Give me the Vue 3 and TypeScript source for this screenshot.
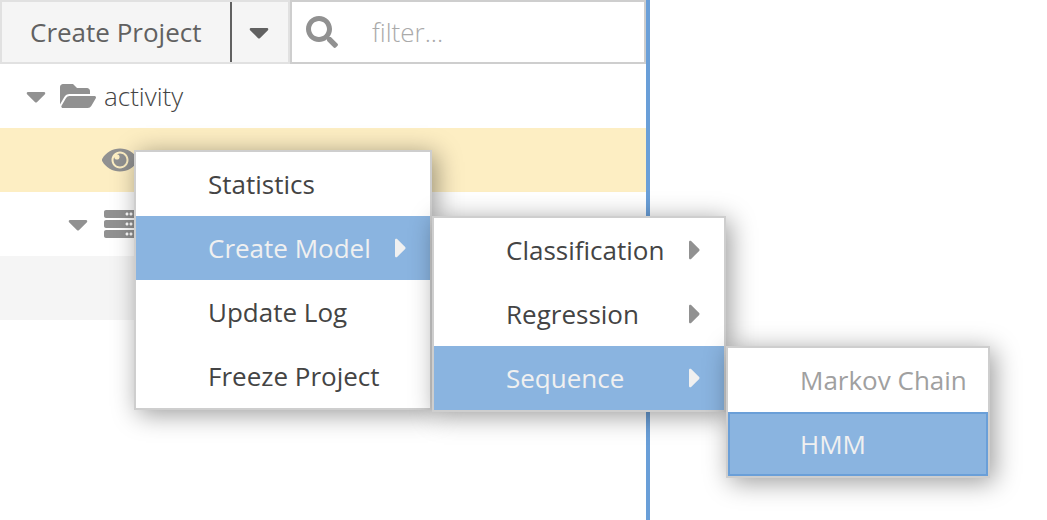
<script setup lang="ts">
import { ref } from 'vue'

interface MenuEntry {
  label: string
  submenu?: boolean
  active?: boolean
}

const projectMenu = ref<MenuEntry[]>([
  { label: 'Statistics' },
  { label: 'Create Model', submenu: true, active: true },
  { label: 'Update Log' },
  { label: 'Freeze Project' },
])
const modelMenu = ref<MenuEntry[]>([
  { label: 'Classification', submenu: true },
  { label: 'Regression', submenu: true },
  { label: 'Sequence', submenu: true, active: true },
])
const filter = ref('')

const caretDown =
  'M31.3 192h257.3c17.8 0 26.7 21.5 14.1 34.1L174.1 354.7c-7.8 7.8-20.5 7.8-28.3 0L17.2 226.1C4.6 213.5 13.5 192 31.3 192z'
const caretRight =
  'M0 384.662V127.338c0-17.818 21.543-26.741 34.142-14.142l128.662 128.662c7.81 7.81 7.81 20.474 0 28.284L34.142 398.804C21.543 411.404 0 402.48 0 384.662z'
</script>

<template>
  <div class="page">
    <aside class="sidebar">
      <div class="toolbar">
        <div class="create">
          <button class="create-main">Create Project</button>
          <button class="create-more" aria-label="More">
            <svg class="caret-down" viewBox="0 0 320 512"><path :d="caretDown" /></svg>
          </button>
        </div>
        <label class="filter">
          <svg class="search" viewBox="0 0 512 512">
            <path d="M505 442.7L405.3 343c-4.5-4.5-10.6-7-17-7H372c27.6-35.3 44-79.7 44-128C416 93.1 322.9 0 208 0S0 93.1 0 208s93.1 208 208 208c48.3 0 92.7-16.4 128-44v16.3c0 6.4 2.5 12.5 7 17l99.7 99.7c9.4 9.4 24.6 9.4 33.9 0l28.3-28.3c9.4-9.4 9.4-24.6.1-34zM208 336c-70.7 0-128-57.2-128-128 0-70.7 57.2-128 128-128 70.7 0 128 57.2 128 128 0 70.7-57.2 128-128 128z" />
          </svg>
          <input v-model="filter" type="text" placeholder="filter..." />
        </label>
      </div>

      <div class="row root">
        <svg class="caret-down" viewBox="0 0 320 512"><path :d="caretDown" /></svg>
        <svg class="wide" viewBox="0 0 576 512">
          <path d="M572.694 292.093L500.27 416.248A63.997 63.997 0 0 1 444.989 448H45.025c-18.523 0-30.064-20.093-20.731-36.093l72.424-124.155A64 64 0 0 1 152 256h399.964c18.523 0 30.064 20.093 20.73 36.093zM152 224h328v-48c0-26.51-21.49-48-48-48H272l-64-64H48C21.49 64 0 85.49 0 112v278.046l69.077-118.418C86.214 242.25 117.989 224 152 224z" />
        </svg>
        <span>activity</span>
      </div>
      <div class="row selected">
        <svg class="wide" viewBox="0 0 576 512">
          <path d="M569.354 231.631C512.969 135.949 407.81 72 288 72 168.14 72 63.004 135.994 6.646 231.631a47.999 47.999 0 0 0 0 48.739C63.031 376.051 168.19 440 288 440c119.86 0 224.996-63.994 281.354-159.631a47.997 47.997 0 0 0 0-48.738zM288 392c-75.162 0-136-60.827-136-136 0-75.162 60.826-136 136-136 75.162 0 136 60.826 136 136 0 75.162-60.826 136-136 136zm104-136c0 57.438-46.562 104-104 104s-104-46.562-104-104c0-17.708 4.431-34.379 12.236-48.973l-.001.032c0 23.651 19.173 42.823 42.824 42.823s42.824-19.173 42.824-42.823c0-23.651-19.173-42.824-42.824-42.824l-.032.001C253.621 156.431 270.292 152 288 152c57.438 0 104 46.562 104 104z" />
        </svg>
      </div>
      <div class="row server">
        <svg class="caret-down" viewBox="0 0 320 512"><path :d="caretDown" /></svg>
        <svg class="square" viewBox="0 0 512 512">
          <path
            v-for="n in 3"
            :key="n"
            :transform="`translate(0 ${(n - 1) * 160})`"
            d="M480 160H32c-17.673 0-32-14.327-32-32V64c0-17.673 14.327-32 32-32h448c17.673 0 32 14.327 32 32v64c0 17.673-14.327 32-32 32zm-48-88c-13.255 0-24 10.745-24 24s10.745 24 24 24 24-10.745 24-24-10.745-24-24-24zm-64 0c-13.255 0-24 10.745-24 24s10.745 24 24 24 24-10.745 24-24-10.745-24-24-24z"
          />
        </svg>
      </div>
      <div class="row striped"></div>
    </aside>

    <div class="menu project-menu">
      <div v-for="e in projectMenu" :key="e.label" class="item" :class="{ active: e.active }">
        <span>{{ e.label }}</span>
        <svg v-if="e.submenu" class="caret-right" viewBox="0 0 192 512"><path :d="caretRight" /></svg>
      </div>
      <div class="menu model-menu">
        <div v-for="e in modelMenu" :key="e.label" class="item" :class="{ active: e.active }">
          <span>{{ e.label }}</span>
          <svg v-if="e.submenu" class="caret-right" viewBox="0 0 192 512"><path :d="caretRight" /></svg>
        </div>
        <div class="menu sequence-menu">
          <div class="item disabled"><span>Markov Chain</span></div>
          <div class="item active focused"><span>HMM</span></div>
        </div>
      </div>
    </div>
  </div>
</template>

<style>
body {
  margin: 0;
  background: #fff;
  overflow: hidden;
}
</style>

<style scoped>
.page {
  position: relative;
  height: 520px;
  overflow: hidden;
  font-family: 'Open Sans', 'Noto Sans', sans-serif;
  font-size: 26px;
  color: #444;
}
.page * {
  box-sizing: border-box;
}
svg {
  display: block;
  flex: none;
  height: 32px;
  fill: #919191;
}
.caret-down {
  width: 20px;
}
.caret-right {
  width: 12px;
}
.wide {
  width: 36px;
}
.square,
.search {
  width: 32px;
}
.sidebar {
  width: 650px;
  height: 100%;
  box-sizing: border-box;
  border-right: 4px solid #6a9fd8;
}
.toolbar {
  display: flex;
  height: 64px;
}
.create {
  display: flex;
  width: 290px;
  border: 2px solid #e1e1e1;
  background: #f5f5f5;
}
button {
  margin: 0;
  border: 0;
  background: none;
  font: inherit;
  color: #616161;
}
.create-main {
  width: 230px;
  padding: 0 0 0 28px;
  border-right: 2px solid #616161;
  text-align: left;
  white-space: nowrap;
}
.create-more {
  width: 56px;
  padding: 0 0 0 17px;
}
.create-more svg {
  fill: #616161;
}
.filter {
  display: flex;
  align-items: center;
  width: 356px;
  padding-left: 14px;
  border: 2px solid #cecece;
}
.filter input {
  width: 260px;
  margin-left: 34px;
  padding: 0;
  border: 0;
  outline: 0;
  background: none;
  font: inherit;
  font-weight: 300;
}
.filter input::placeholder {
  color: #aaa;
  opacity: 1;
}
.row {
  display: flex;
  align-items: center;
  height: 64px;
  font-weight: 300;
}
.root {
  padding-left: 26px;
}
.root .wide {
  margin: 0 8px 0 14px;
}
.selected {
  padding-left: 102px;
  background: #fdeec3;
}
.server {
  gap: 16px;
  padding-left: 68px;
}
.striped {
  background: #f5f5f5;
}
.menu {
  position: absolute;
  border: 2px solid #cecece;
  background: #fff;
  box-shadow: 4px 4px 24px rgba(0, 0, 0, 0.4);
}
.project-menu {
  left: 134px;
  top: 150px;
  width: 298px;
}
.model-menu {
  left: 296px;
  top: 64px;
  width: 294px;
}
.sequence-menu {
  left: 292px;
  top: 128px;
  width: 264px;
}
.item {
  display: flex;
  align-items: center;
  justify-content: space-between;
  height: 64px;
  padding: 0 23px 0 72px;
  white-space: nowrap;
}
.item.active {
  background: #8ab4e0;
  color: #f0f0f0;
}
.item.active svg {
  fill: #f0f0f0;
}
.item.disabled {
  padding-right: 0;
  color: #a0a0a0;
}
.item.focused {
  box-shadow: inset 0 0 0 2px #6a9fd8;
}
</style>
